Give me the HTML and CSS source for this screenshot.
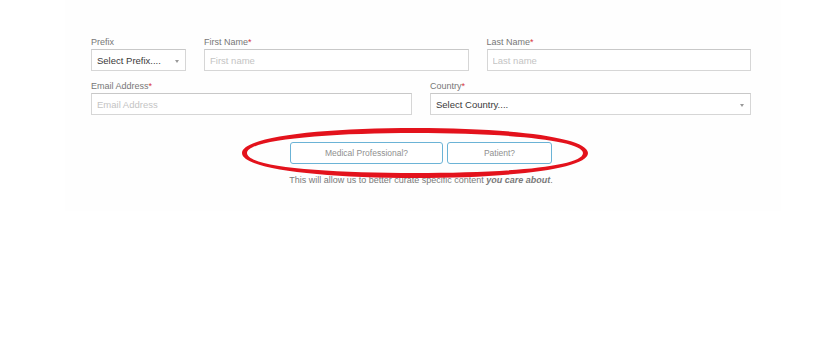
FILE: index.html
```html
<!DOCTYPE html>
<html lang="en">
<head>
    <meta charset="UTF-8">
    <meta name="viewport" content="width=device-width, initial-scale=1.0">
    <title>Sign Up</title>
    <link rel="stylesheet" href="styles.css">
</head>
<body>
    <div class="panel">
        <form class="signup">
            <div class="row row-top">
                <div class="field">
                    <label>Prefix</label>
                    <div class="select">Select Prefix....<span class="caret"></span></div>
                </div>
                <div class="field">
                    <label>First Name<span class="req">*</span></label>
                    <input type="text" placeholder="First name">
                </div>
                <div class="field">
                    <label>Last Name<span class="req">*</span></label>
                    <input type="text" placeholder="Last name">
                </div>
            </div>
            <div class="row row-bottom">
                <div class="field">
                    <label>Email Address<span class="req">*</span></label>
                    <input type="text" placeholder="Email Address">
                </div>
                <div class="field">
                    <label>Country<span class="req">*</span></label>
                    <div class="select">Select Country....<span class="caret"></span></div>
                </div>
            </div>

            <div class="choice">
                <div class="buttons">
                    <button type="button" class="btn btn-wide">Medical Professional?</button>
                    <button type="button" class="btn">Patient?</button>
                    <!-- red marker circle drawn over the buttons -->
                    <svg class="marker" width="350" height="52" viewBox="0 0 350 52">
                        <path fill="#e3121c" fill-rule="evenodd"
                              d="M2 26 C2 10 80 1 175 1 C270 1 348 10 348 26 C348 42 270 51 175 51 C80 51 2 42 2 26 Z
                                 M7 26 C7 40 85 46 175 46 C265 46 343 40 343 26 C343 13 265 6 175 6 C85 6 7 13 7 26 Z"/>
                    </svg>
                </div>
                <p class="note">This will allow us to better curate specific content <em>you care about</em>.</p>
            </div>
        </form>
    </div>
</body>
</html>
```

FILE: styles.css
```css
body {
    margin: 0;
    padding: 0;
    background: #fff;
    font-family: 'Liberation Sans', Arial, sans-serif;
    color: #666;
}
.panel {
    width: 716px;
    margin-left: 65px;
    padding: 36px 0 26px;
    background: #fefefe;
}
.signup {
    width: 660px;
    margin-left: 26px;
}
.row {
    display: grid;
    column-gap: 18px;
}
.row-top {
    grid-template-columns: 95px 1fr 1fr;
}
.row-bottom {
    grid-template-columns: 1fr 1fr;
    margin-top: 9px;
}
.field label {
    display: block;
    font-size: 9px;
    line-height: 12px;
    margin-bottom: 1px;
    color: #777;
}
.req {
    color: #d9363e;
}
.field input,
.select {
    box-sizing: border-box;
    width: 100%;
    height: 22px;
    margin: 0;
    padding: 0 5px;
    border: 1px solid #d6d6d6;
    border-top-color: #c8c8c8;
    background: #fff;
    font-family: inherit;
    font-size: 9.5px;
    outline: none;
}
.field input::placeholder {
    color: #c4c4c4;
}
.select {
    position: relative;
    display: flex;
    align-items: center;
    font-size: 9.5px;
    color: #3a3a3a;
}
.caret {
    position: absolute;
    right: 6px;
    top: 10px;
    border-left: 2.5px solid transparent;
    border-right: 2.5px solid transparent;
    border-top: 3px solid #999;
}
.choice {
    margin-top: 27px;
    display: flex;
    flex-direction: column;
    align-items: center;
}
.buttons {
    position: relative;
    display: flex;
    gap: 4px;
}
.btn {
    height: 22px;
    width: 105px;
    padding: 0;
    background: #fff;
    border: 1.5px solid #6bb3d6;
    border-radius: 3px;
    font-family: inherit;
    font-size: 8.5px;
    color: #8f8f8f;
    cursor: pointer;
}
.btn-wide {
    width: 153px;
}
.marker {
    position: absolute;
    left: -50px;
    top: -15px;
    pointer-events: none;
}
.note {
    margin: 11px 0 0;
    font-size: 9px;
    color: #7a7a7a;
}
.note em {
    font-weight: bold;
}
```
